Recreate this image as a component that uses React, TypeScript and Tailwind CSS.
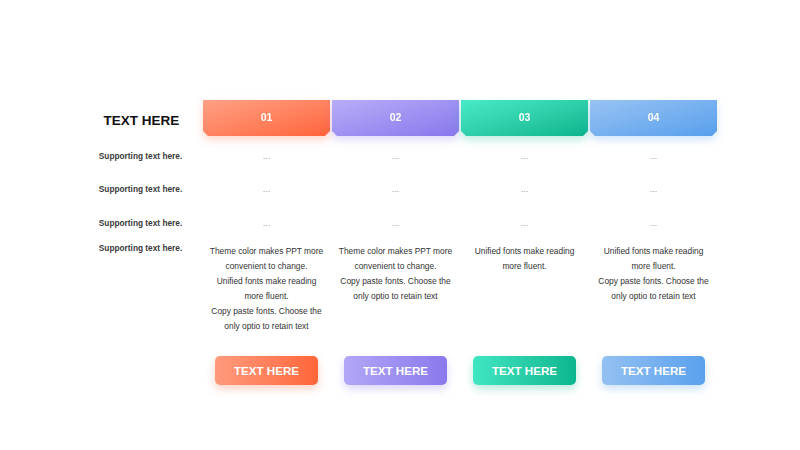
const COLUMNS = [
  {
    num: '01',
    tab: 'bg-gradient-to-br from-[#ffa084] to-[#ff6338]',
    tabShadow: 'drop-shadow-[0_4px_4px_rgba(255,110,70,0.28)]',
    btn: 'bg-gradient-to-r from-[#ff9a7c] to-[#ff6539] shadow-[0_4px_8px_rgba(255,110,70,0.3)]',
    lines: [
      'Theme color makes PPT more',
      'convenient to change.',
      'Unified fonts make reading',
      'more fluent.',
      'Copy paste fonts. Choose the',
      'only optio to retain text',
    ],
  },
  {
    num: '02',
    tab: 'bg-gradient-to-br from-[#b8adf7] to-[#8877ec]',
    tabShadow: 'drop-shadow-[0_4px_4px_rgba(137,120,236,0.28)]',
    btn: 'bg-gradient-to-r from-[#b2a6f6] to-[#8a79ec] shadow-[0_4px_8px_rgba(137,120,236,0.3)]',
    lines: [
      'Theme color makes PPT more',
      'convenient to change.',
      'Copy paste fonts. Choose the',
      'only optio to retain text',
    ],
  },
  {
    num: '03',
    tab: 'bg-gradient-to-br from-[#48ebc8] to-[#06b48c]',
    tabShadow: 'drop-shadow-[0_4px_4px_rgba(20,190,150,0.28)]',
    btn: 'bg-gradient-to-r from-[#3fe6c2] to-[#08b68e] shadow-[0_4px_8px_rgba(20,190,150,0.3)]',
    lines: ['Unified fonts make reading', 'more fluent.'],
  },
  {
    num: '04',
    tab: 'bg-gradient-to-br from-[#98c3f3] to-[#579fec]',
    tabShadow: 'drop-shadow-[0_4px_4px_rgba(90,160,236,0.28)]',
    btn: 'bg-gradient-to-r from-[#93c0f2] to-[#5aa1ec] shadow-[0_4px_8px_rgba(90,160,236,0.3)]',
    lines: [
      'Unified fonts make reading',
      'more fluent.',
      'Copy paste fonts. Choose the',
      'only optio to retain text',
    ],
  },
];

const DOT_ROWS = ['h-[34px]', 'h-[33px]', 'h-[34px]'];

export default function App() {
  return (
    <div className="w-[800px] h-[450px] bg-white font-['Liberation_Sans',Arial,sans-serif] pt-[100px] pl-[80px]">
      <div className="grid grid-cols-[121px_127px_127px_127px_127px] gap-x-[2px]">
        {/* header */}
        <div className="h-[36px] flex items-center justify-center text-[13.5px] font-bold text-[#111] pt-[6px] pl-[2px]">
          TEXT HERE
        </div>
        {COLUMNS.map(col => (
          <div key={col.num} className={`h-[36px] ${col.tabShadow}`}>
            <div
              className={`h-full flex items-center justify-center text-white text-[10.5px] font-bold ${col.tab} [clip-path:polygon(0_0,100%_0,100%_calc(100%-5px),calc(100%-5px)_100%,5px_100%,0_calc(100%-5px))]`}
            >
              {col.num}
            </div>
          </div>
        ))}

        <div className="col-span-5 h-[2px]" />

        {/* dotted rows */}
        {DOT_ROWS.map((h, i) => (
          <div key={i} className="contents">
            <div className={`${h} flex items-center justify-center text-[8.3px] font-bold text-[#3a3a3a] pt-[2px]`}>
              Supporting text here.
            </div>
            {COLUMNS.map(col => (
              <div key={col.num} className={`${h} flex items-center justify-center text-[9px] text-[#9a9a9a] pt-[3px]`}>
                ...
              </div>
            ))}
          </div>
        ))}

        {/* description row */}
        <div className="pt-[3px] text-center text-[8.3px] leading-[12px] font-bold text-[#3a3a3a]">
          Supporting text here.
        </div>
        {COLUMNS.map(col => (
          <div key={col.num} className="h-[117px] pt-[5px] flex flex-col items-center text-[8.4px] leading-[15px] text-[#333]">
            {col.lines.map(line => (
              <span key={line} className="whitespace-nowrap">{line}</span>
            ))}
          </div>
        ))}

        {/* buttons */}
        <div />
        {COLUMNS.map(col => (
          <div key={col.num} className="flex justify-center">
            <button
              className={`w-[103px] h-[29px] rounded-[5px] text-white text-[11.6px] font-bold ${col.btn}`}
            >
              TEXT HERE
            </button>
          </div>
        ))}
      </div>
    </div>
  );
}
